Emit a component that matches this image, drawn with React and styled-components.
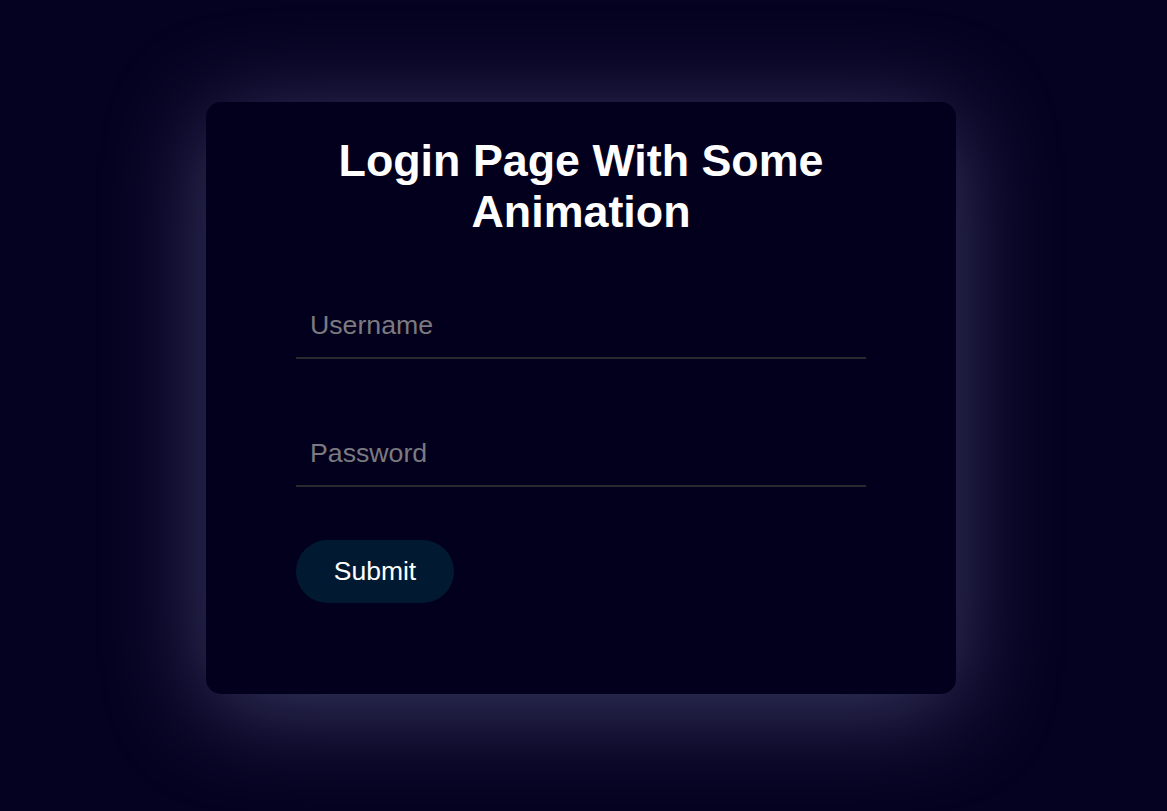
import styled, { createGlobalStyle } from "styled-components";

const GlobalStyle = createGlobalStyle`
  html, body {
    margin: 0;
    padding: 0;
    background: #050221;
    font-family: "Liberation Sans", Arial, sans-serif;
  }
  * {
    box-sizing: border-box;
  }
`;

const Page = styled.div`
  min-height: 100vh;
  display: flex;
  align-items: center;
  justify-content: center;
  padding: 0 5px 16px 0;
`;

const Card = styled.form`
  width: 750px;
  padding: 33px 90px 91px;
  background: #03001d;
  border-radius: 15px;
  box-shadow: 0 14px 100px rgba(125, 128, 180, 0.46);
  display: flex;
  flex-direction: column;
`;

const Title = styled.h1`
  margin: 0 0 56px;
  color: #ffffff;
  font-size: 44.8px;
  font-weight: 700;
  line-height: 51.5px;
  text-align: center;
`;

const Field = styled.input`
  display: block;
  width: 100%;
  height: 65px;
  margin-bottom: ${({ $gap }) => $gap}px;
  padding: 16px 14px;
  background: transparent;
  border: none;
  border-bottom: 2px solid #29282d;
  outline: none;
  color: #ffffff;
  font-family: inherit;
  font-size: 26.7px;

  &::placeholder {
    color: #7b7a80;
  }
`;

const SubmitButton = styled.button`
  align-self: flex-start;
  height: 63px;
  width: 158px;
  padding: 0;
  border: none;
  border-radius: 32px;
  background: #021a31;
  color: #ffffff;
  font-family: inherit;
  font-size: 26.5px;
  cursor: pointer;
`;

export default function App() {
  return (
    <>
      <GlobalStyle />
      <Page>
        <Card onSubmit={(e) => e.preventDefault()}>
          <Title>Login Page With Some Animation</Title>
          <Field type="text" placeholder="Username" $gap={63} />
          <Field type="password" placeholder="Password" $gap={53} />
          <SubmitButton type="submit">Submit</SubmitButton>
        </Card>
      </Page>
    </>
  );
}
